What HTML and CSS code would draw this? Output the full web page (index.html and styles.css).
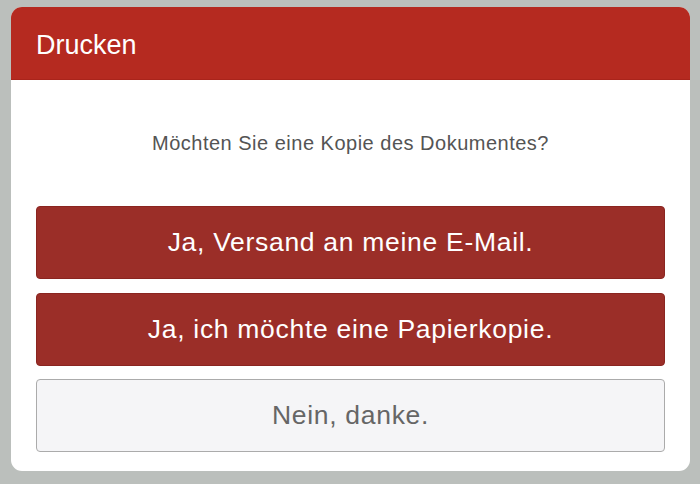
FILE: index.html
```html
<!DOCTYPE html>
<html lang="de">
<head>
  <meta charset="UTF-8" />
  <meta name="viewport" content="width=device-width, initial-scale=1.0" />
  <title>Drucken</title>
  <link rel="stylesheet" href="styles.css">
</head>
<body>
  <div class="dialog">
    <div class="dialog-header">Drucken</div>
    <div class="dialog-body">
      <p class="message">Möchten Sie eine Kopie des Dokumentes?</p>
      <div class="actions">
        <button class="btn btn-primary">Ja, Versand an meine E-Mail.</button>
        <button class="btn btn-primary">Ja, ich möchte eine Papierkopie.</button>
        <button class="btn btn-cancel">Nein, danke.</button>
      </div>
    </div>
  </div>
</body>
</html>
```

FILE: styles.css
```css
* { box-sizing: border-box; margin: 0; padding: 0; }
body {
  background: #bbbfbc;
  font-family: 'Liberation Sans', Arial, sans-serif;
  padding: 7px 10px 13px 11px;
  height: 484px; overflow: hidden;
}
.dialog {
  width: 679px; height: 464px;
  background: #fff;
  border-radius: 11px;
  overflow: hidden;
}
.dialog-header {
  height: 73px;
  background: #b52a20;
  border-bottom: 1px solid #a9241b;
  color: #fff;
  font-size: 27px;
  padding: 23px 0 0 25px;
  line-height: 30px;
}
.dialog-body {
  padding: 0 25px 19px;
}
.message {
  padding-top: 52px;
  line-height: 22px;
  font-size: 20px;
  color: #545454;
  text-align: center;
  letter-spacing: 0.5px;
}
.actions {
  display: flex; flex-direction: column;
  gap: 13.5px;
  margin-top: 52px;
}
.btn {
  height: 73px; width: 100%;
  font-family: inherit;
  font-size: 26.5px;
  letter-spacing: 0.7px;
  border-radius: 4px;
  cursor: pointer;
}
.btn-primary {
  background: #9b2e28;
  border: 1px solid #8a2520;
  color: #fff;
}
.btn-cancel {
  background: #f5f5f7;
  border: 1px solid #ababab;
  color: #666;
}
```
